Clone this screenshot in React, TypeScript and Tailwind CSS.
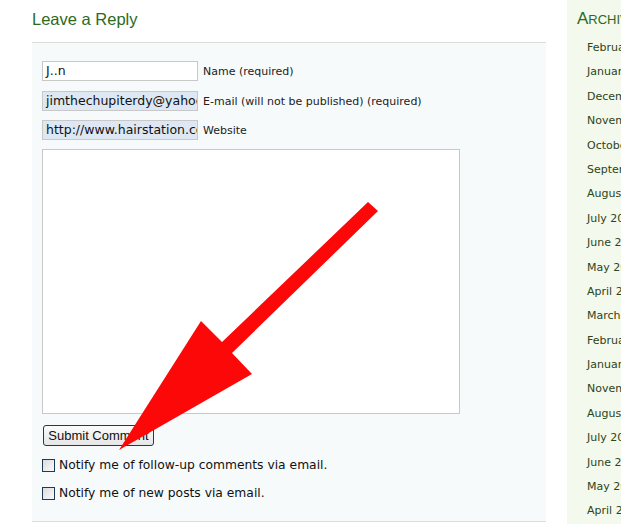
import React from "react";

const archives = [
  "February 2011",
  "January 2011",
  "December 2010",
  "November 2010",
  "October 2010",
  "September 2010",
  "August 2010",
  "July 2010",
  "June 2010",
  "May 2010",
  "April 2010",
  "March 2010",
  "February 2010",
  "January 2010",
  "November 2009",
  "August 2009",
  "July 2009",
  "June 2009",
  "May 2009",
  "April 2009",
];

const verdana = { fontFamily: '"DejaVu Sans", Verdana, sans-serif' };

function Field({ value, label, filled }: { value: string; label: string; filled?: boolean }) {
  return (
    <div className="flex items-center h-[20px]">
      <div
        className={`w-[156px] h-[20px] shrink-0 border border-[#c8c8c8] overflow-hidden whitespace-nowrap pl-[3px] text-[12.5px] leading-[18px] text-[#111] ${
          filled ? "bg-[#dde8f4]" : "bg-white"
        }`}
        style={verdana}
      >
        {value}
      </div>
      <span className="ml-[5px] pt-[2px] text-[11px] text-[#222] whitespace-nowrap" style={verdana}>
        {label}
      </span>
    </div>
  );
}

function Check({ label }: { label: string }) {
  return (
    <label className="flex items-center gap-[4px] h-[14px]">
      <span className="w-[13px] h-[13px] border border-[#1d3a58] bg-gradient-to-br from-[#dcdcdc] to-[#fafafa]" />
      <span className="text-[12.3px] text-[#111] whitespace-nowrap" style={verdana}>
        {label}
      </span>
    </label>
  );
}

export default function App() {
  return (
    <div className="relative w-[621px] h-[524px] overflow-hidden bg-white flex">
      {/* Main column */}
      <div className="w-[546px] shrink-0 pl-[32px] pt-[9px]">
        <h3
          className="text-[16.5px] leading-[20px] text-[#2c6a1c] h-[33px]"
          style={{ fontFamily: '"Liberation Sans", Arial, sans-serif' }}
        >
          Leave a Reply
        </h3>
        <div className="h-[480px] border-t border-b border-[#dcdcdc] bg-[#f6fafb] pl-[10px] pt-[18px]">
          <div className="flex flex-col">
            <Field value="J..n" label="Name (required)" />
            <div className="mt-[10px]">
              <Field value="jimthechupiterdy@yahoo.co" label="E-mail (will not be published) (required)" filled />
            </div>
            <div className="mt-[9px]">
              <Field value="http://www.hairstation.com" label="Website" filled />
            </div>
          </div>
          <div className="mt-[9px] w-[418px] h-[265px] bg-white border border-[#c8c8c8]" />
          <button
            className="mt-[11px] ml-[1px] h-[21px] w-[111px] rounded-[3px] border border-[#1d3a58] bg-gradient-to-b from-[#fbfbfb] to-[#e6e6e6] text-[13px] text-[#111] leading-none"
            style={{ fontFamily: '"Liberation Sans", Arial, sans-serif' }}
          >
            Submit Comment
          </button>
          <div className="mt-[12px] flex flex-col gap-[14px]">
            <Check label="Notify me of follow-up comments via email." />
            <Check label="Notify me of new posts via email." />
          </div>
        </div>
      </div>

      {/* Sidebar */}
      <div className="ml-[21px] flex-1 bg-[#f3f9ec] pl-[10px] pt-[9px] overflow-hidden">
        <h2
          className="text-[#2c6a1c] whitespace-nowrap leading-[20px] h-[29px]"
          style={{ fontFamily: '"Liberation Sans", Arial, sans-serif' }}
        >
          <span className="text-[17px]">A</span>
          <span className="text-[13px]">RCHIVES</span>
        </h2>
        <ul className="pl-[10px]">
          {archives.map((a, i) => (
            <li key={i} className="h-[24.4px] text-[11px] leading-[20px] text-[#2e4419] whitespace-nowrap" style={verdana}>
              {a}
            </li>
          ))}
        </ul>
      </div>

      {/* Red arrow annotation */}
      <svg className="absolute inset-0 pointer-events-none" width="621" height="524" viewBox="0 0 621 524">
        <polygon
          points="368,202 378,211 232,353 252,374 119,450 201,321 222,342"
          fill="#fc0808"
        />
      </svg>
    </div>
  );
}
